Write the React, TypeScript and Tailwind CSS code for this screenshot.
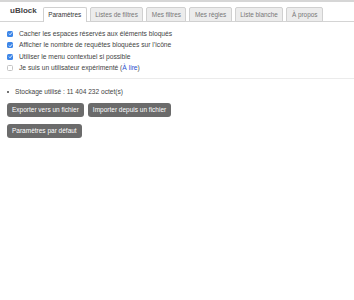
import React from 'react';

const tabs = ['Paramètres', 'Listes de filtres', 'Mes filtres', 'Mes règles', 'Liste blanche', 'À propos'];

const options = [
  { label: 'Cacher les espaces réservés aux éléments bloqués', checked: true },
  { label: 'Afficher le nombre de requêtes bloquées sur l’icône', checked: true },
  { label: 'Utiliser le menu contextuel si possible', checked: true },
  { label: 'Je suis un utilisateur expérimenté', checked: false, link: 'À lire' },
];

function Box({ checked }: { checked: boolean }) {
  if (!checked) {
    return <span className="h-[6px] w-[6px] shrink-0 rounded-[1.5px] border border-[#c4c4c4] bg-white" />;
  }
  return (
    <span className="flex h-[6px] w-[6px] shrink-0 items-center justify-center rounded-[1.5px] bg-[#3d86e8]">
      <svg viewBox="0 0 8 8" className="h-[5px] w-[5px]">
        <path d="M1.5 4.2 3.3 6 6.6 2" fill="none" stroke="white" strokeWidth="1.4" />
      </svg>
    </span>
  );
}

function Btn({ children }: { children: React.ReactNode }) {
  return (
    <button className="h-[14.5px] rounded-[3px] bg-[#6b6b6b] px-[5px] text-[6.5px] leading-none text-white">
      {children}
    </button>
  );
}

export default function App() {
  return (
    <div className="min-h-[300px] w-[354px] border-t-2 border-[#d6d6d6] bg-white text-[#444]" style={{ fontFamily: '"Liberation Sans", Arial, sans-serif' }}>
      <div className="flex h-[20px] items-end border-b border-[#d4d4d4] pl-[10px]">
        <span className="mb-[4px] mr-[6px] text-[8px] font-bold text-[#444]">uBlock</span>
        <div className="-mb-px flex gap-[3px]">
          {tabs.map((t, i) => (
            <span
              key={t}
              className={
                i === 0
                  ? 'flex h-[15px] items-center rounded-t-[2px] border border-b-0 border-[#d0d0d0] bg-white px-[4.5px] text-[6.4px] text-[#333]'
                  : 'flex h-[15px] items-center rounded-t-[2px] border border-[#d0d0d0] bg-[#ececec] px-[4.5px] text-[6.4px] text-[#777]'
              }
            >
              {t}
            </span>
          ))}
        </div>
      </div>

      <div className="flex flex-col gap-[4px] pl-[7px] pt-[8px] text-[6.7px]">
        {options.map((o) => (
          <label key={o.label} className="flex h-[7.5px] items-center gap-[6px]">
            <Box checked={o.checked} />
            <span>
              {o.label}
              {o.link && (
                <>
                  {' ('}
                  <span className="text-[#2a4fcf]">{o.link}</span>
                  {')'}
                </>
              )}
            </span>
          </label>
        ))}
      </div>

      <div className="mt-[6px] border-t border-[#ebebeb] pl-[7px] pt-[8px]">
        <div className="flex items-center gap-[6px] text-[6.6px]">
          <span className="h-[2px] w-[2px] rounded-full bg-[#444]" />
          <span>Stockage utilisé : 11 404 232 octet(s)</span>
        </div>
        <div className="mt-[6px] flex gap-[4px]">
          <Btn>Exporter vers un fichier</Btn>
          <Btn>Importer depuis un fichier</Btn>
        </div>
        <div className="mt-[6.5px] flex">
          <Btn>Paramètres par défaut</Btn>
        </div>
      </div>
    </div>
  );
}
